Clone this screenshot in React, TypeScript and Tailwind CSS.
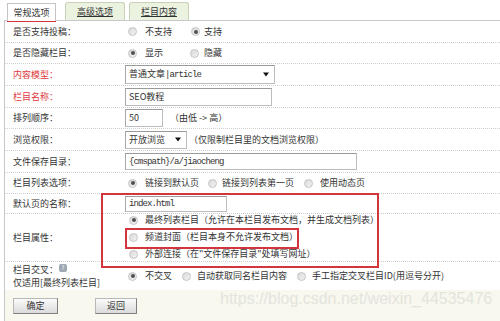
import React from 'react';

function Radio({ checked }: { checked?: boolean }) {
  return (
    <span className="inline-flex w-[9px] h-[9px] shrink-0 items-center justify-center rounded-full border border-[#c4c4c4] bg-linear-to-br from-[#d9d9d9] to-[#f4f4f4]">
      {checked && <span className="w-[4px] h-[4px] rounded-full bg-[#505050]" />}
    </span>
  );
}

function Opt({ label, checked, ml, gap }: { label: string; checked?: boolean; ml: string; gap: string }) {
  return (
    <span className={`inline-flex items-center ${ml}`}>
      <Radio checked={checked} />
      <span className={gap}>{label}</span>
    </span>
  );
}

function Arrow() {
  return (
    <svg width="6" height="5" viewBox="0 0 6 5" className="shrink-0">
      <path d="M0 0.5H6L3 4.5Z" fill="#111" />
    </svg>
  );
}

const row = 'flex border-b border-dotted border-[#cfcfcf]';
const label = 'w-[120px] shrink-0 pl-[8px] flex items-center';
const input = 'flex items-center border border-[#bdbdbd] border-t-[#9a9a9a] border-l-[#a8a8a8] bg-white px-[3px]';
const mono = "font-['Liberation_Mono','Noto_Sans_CJK_SC',monospace] tracking-[-0.9px]";

export default function App() {
  return (
    <div className="relative w-[500px] h-[321px] overflow-hidden bg-white text-[9px] leading-[12px] text-[#333] font-['Noto_Sans_CJK_SC',sans-serif]">
      {/* tabs */}
      <div className="flex items-end h-[20px] pl-[7px]">
        <div className="relative z-10 mb-[-1px] flex items-center justify-center w-[49px] h-[18px] bg-white border border-b-0 border-[#c4c4c4]">
          常规选项
        </div>
        <div className="ml-[9px] flex items-center justify-center w-[60px] h-[18px] rounded-t-[3px] border border-b-0 border-[#c9d2b8] bg-[#ebf2df] underline">
          高级选项
        </div>
        <div className="ml-[4px] flex items-center justify-center w-[60px] h-[18px] rounded-t-[3px] border border-b-0 border-[#c9d2b8] bg-[#ebf2df] underline">
          栏目内容
        </div>
      </div>

      <div className="ml-[4px] border-l border-t border-[#c8c8c8]">
        <div className={`${row} h-[22px]`}>
          <div className={label}>是否支持投稿：</div>
          <div className="flex items-center pl-[3px]">
            <Opt label="不支持" ml="" gap="ml-[8px]" />
            <Opt label="支持" checked ml="ml-[19px]" gap="ml-[4px]" />
          </div>
        </div>

        <div className={`${row} h-[21px]`}>
          <div className={label}>是否隐藏栏目：</div>
          <div className="flex items-center pl-[3px]">
            <Opt label="显示" checked ml="" gap="ml-[8px]" />
            <Opt label="隐藏" ml="ml-[27px]" gap="ml-[5px]" />
          </div>
        </div>

        <div className={`${row} h-[22px]`}>
          <div className={`${label} text-[#e0383e]`}>内容模型：</div>
          <div className="flex items-center">
            <div className={`${input} w-[150px] h-[19px] justify-between pr-[5px]`}>
              <span>
                普通文章<span className={mono}>|article</span>
              </span>
              <Arrow />
            </div>
          </div>
        </div>

        <div className={`${row} h-[22px]`}>
          <div className={`${label} text-[#e0383e]`}>栏目名称：</div>
          <div className="flex items-center">
            <div className={`${input} w-[147px] h-[18px]`}>SEO教程</div>
          </div>
        </div>

        <div className={`${row} h-[21px]`}>
          <div className={label}>排列顺序：</div>
          <div className="flex items-center">
            <div className={`${input} w-[38px] h-[18px]`}>50</div>
            <span className="ml-[7px]">（由低 -&gt; 高）</span>
          </div>
        </div>

        <div className={`${row} h-[22px]`}>
          <div className={label}>浏览权限：</div>
          <div className="flex items-center">
            <div className={`${input} w-[62px] h-[18px] justify-between pr-[5px]`}>
              <span>开放浏览</span>
              <Arrow />
            </div>
            <span className="ml-[2px]">（仅限制栏目里的文档浏览权限）</span>
          </div>
        </div>

        <div className={`${row} h-[22px]`}>
          <div className={label}>文件保存目录：</div>
          <div className="flex items-center">
            <div className={`${input} w-[232px] h-[17px] ${mono}`}>{'{cmspath}/a/jiaocheng'}</div>
          </div>
        </div>

        <div className={`${row} h-[21px]`}>
          <div className={label}>栏目列表选项：</div>
          <div className="flex items-center pl-[3px]">
            <Opt label="链接到默认页" checked ml="" gap="ml-[8px]" />
            <Opt label="链接到列表第一页" ml="ml-[9px]" gap="ml-[5px]" />
            <Opt label="使用动态页" ml="ml-[10px]" gap="ml-[7px]" />
          </div>
        </div>

        <div className={`${row} h-[20px]`}>
          <div className={label}>默认页的名称：</div>
          <div className="flex items-center">
            <div className={`${input} w-[102px] h-[16px] ${mono}`}>index.html</div>
          </div>
        </div>

        <div className={`${row} h-[48px]`}>
          <div className={label}>栏目属性：</div>
          <div className="flex flex-col gap-[5px] pl-[4px] pt-[0px]">
            <Opt label="最终列表栏目（允许在本栏目发布文档，并生成文档列表）" checked ml="" gap="ml-[7px]" />
            <Opt label="频道封面（栏目本身不允许发布文档）" ml="" gap="ml-[7px]" />
            <Opt label={'外部连接（在"文件保存目录"处填写网址）'} ml="" gap="ml-[7px]" />
          </div>
        </div>

        <div className="flex h-[28px]">
          <div className="w-[120px] shrink-0 pl-[8px] flex flex-col justify-center leading-[13px]">
            <div className="flex items-center">
              栏目交叉：
              <span className="ml-[1px] mt-[-3px] inline-flex w-[8px] h-[8px] items-center justify-center rounded-[2px] bg-[#9ea8b3] text-[6px] leading-[8px] text-white">
                ?
              </span>
            </div>
            <div>仅适用[最终列表栏目]</div>
          </div>
          <div className="flex items-center pl-[3px]">
            <Opt label="不交叉" checked ml="" gap="ml-[8px]" />
            <Opt label="自动获取同名栏目内容" ml="ml-[10px]" gap="ml-[6px]" />
            <Opt label="手工指定交叉栏目ID(用逗号分开)" ml="ml-[10px]" gap="ml-[6px]" />
          </div>
        </div>

        <div className="flex items-center h-[31px] bg-[#f8f8ee] pl-[8px]">
          <button className="w-[45px] h-[16px] border border-[#b8b8b8] border-r-[#808080] border-b-[#808080] bg-linear-to-b from-[#fbfbfb] to-[#dadada] text-[9px] leading-[12px]">
            确定
          </button>
          <button className="ml-[37px] w-[42px] h-[16px] border border-[#b8b8b8] border-r-[#808080] border-b-[#808080] bg-linear-to-b from-[#fbfbfb] to-[#dadada] text-[9px] leading-[12px]">
            返回
          </button>
        </div>
      </div>

      {/* annotations */}
      <div className="absolute left-[7px] top-[3px] w-[49px] h-[19px] border-2 border-[#d2363c]" />
      <div className="absolute left-[101px] top-[193px] w-[278px] h-[75px] border-2 border-[#d2363c]" />
      <div className="absolute left-[125px] top-[228px] w-[174px] h-[21px] border-2 border-[#d2363c]" />

      {/* watermark */}
      <div className="absolute left-[220px] top-[291px] text-[16px] leading-[16px] text-[#e4e4de] font-['Liberation_Sans',sans-serif]">
        https://blog.csdn.net/weixin_44535476
      </div>
    </div>
  );
}
